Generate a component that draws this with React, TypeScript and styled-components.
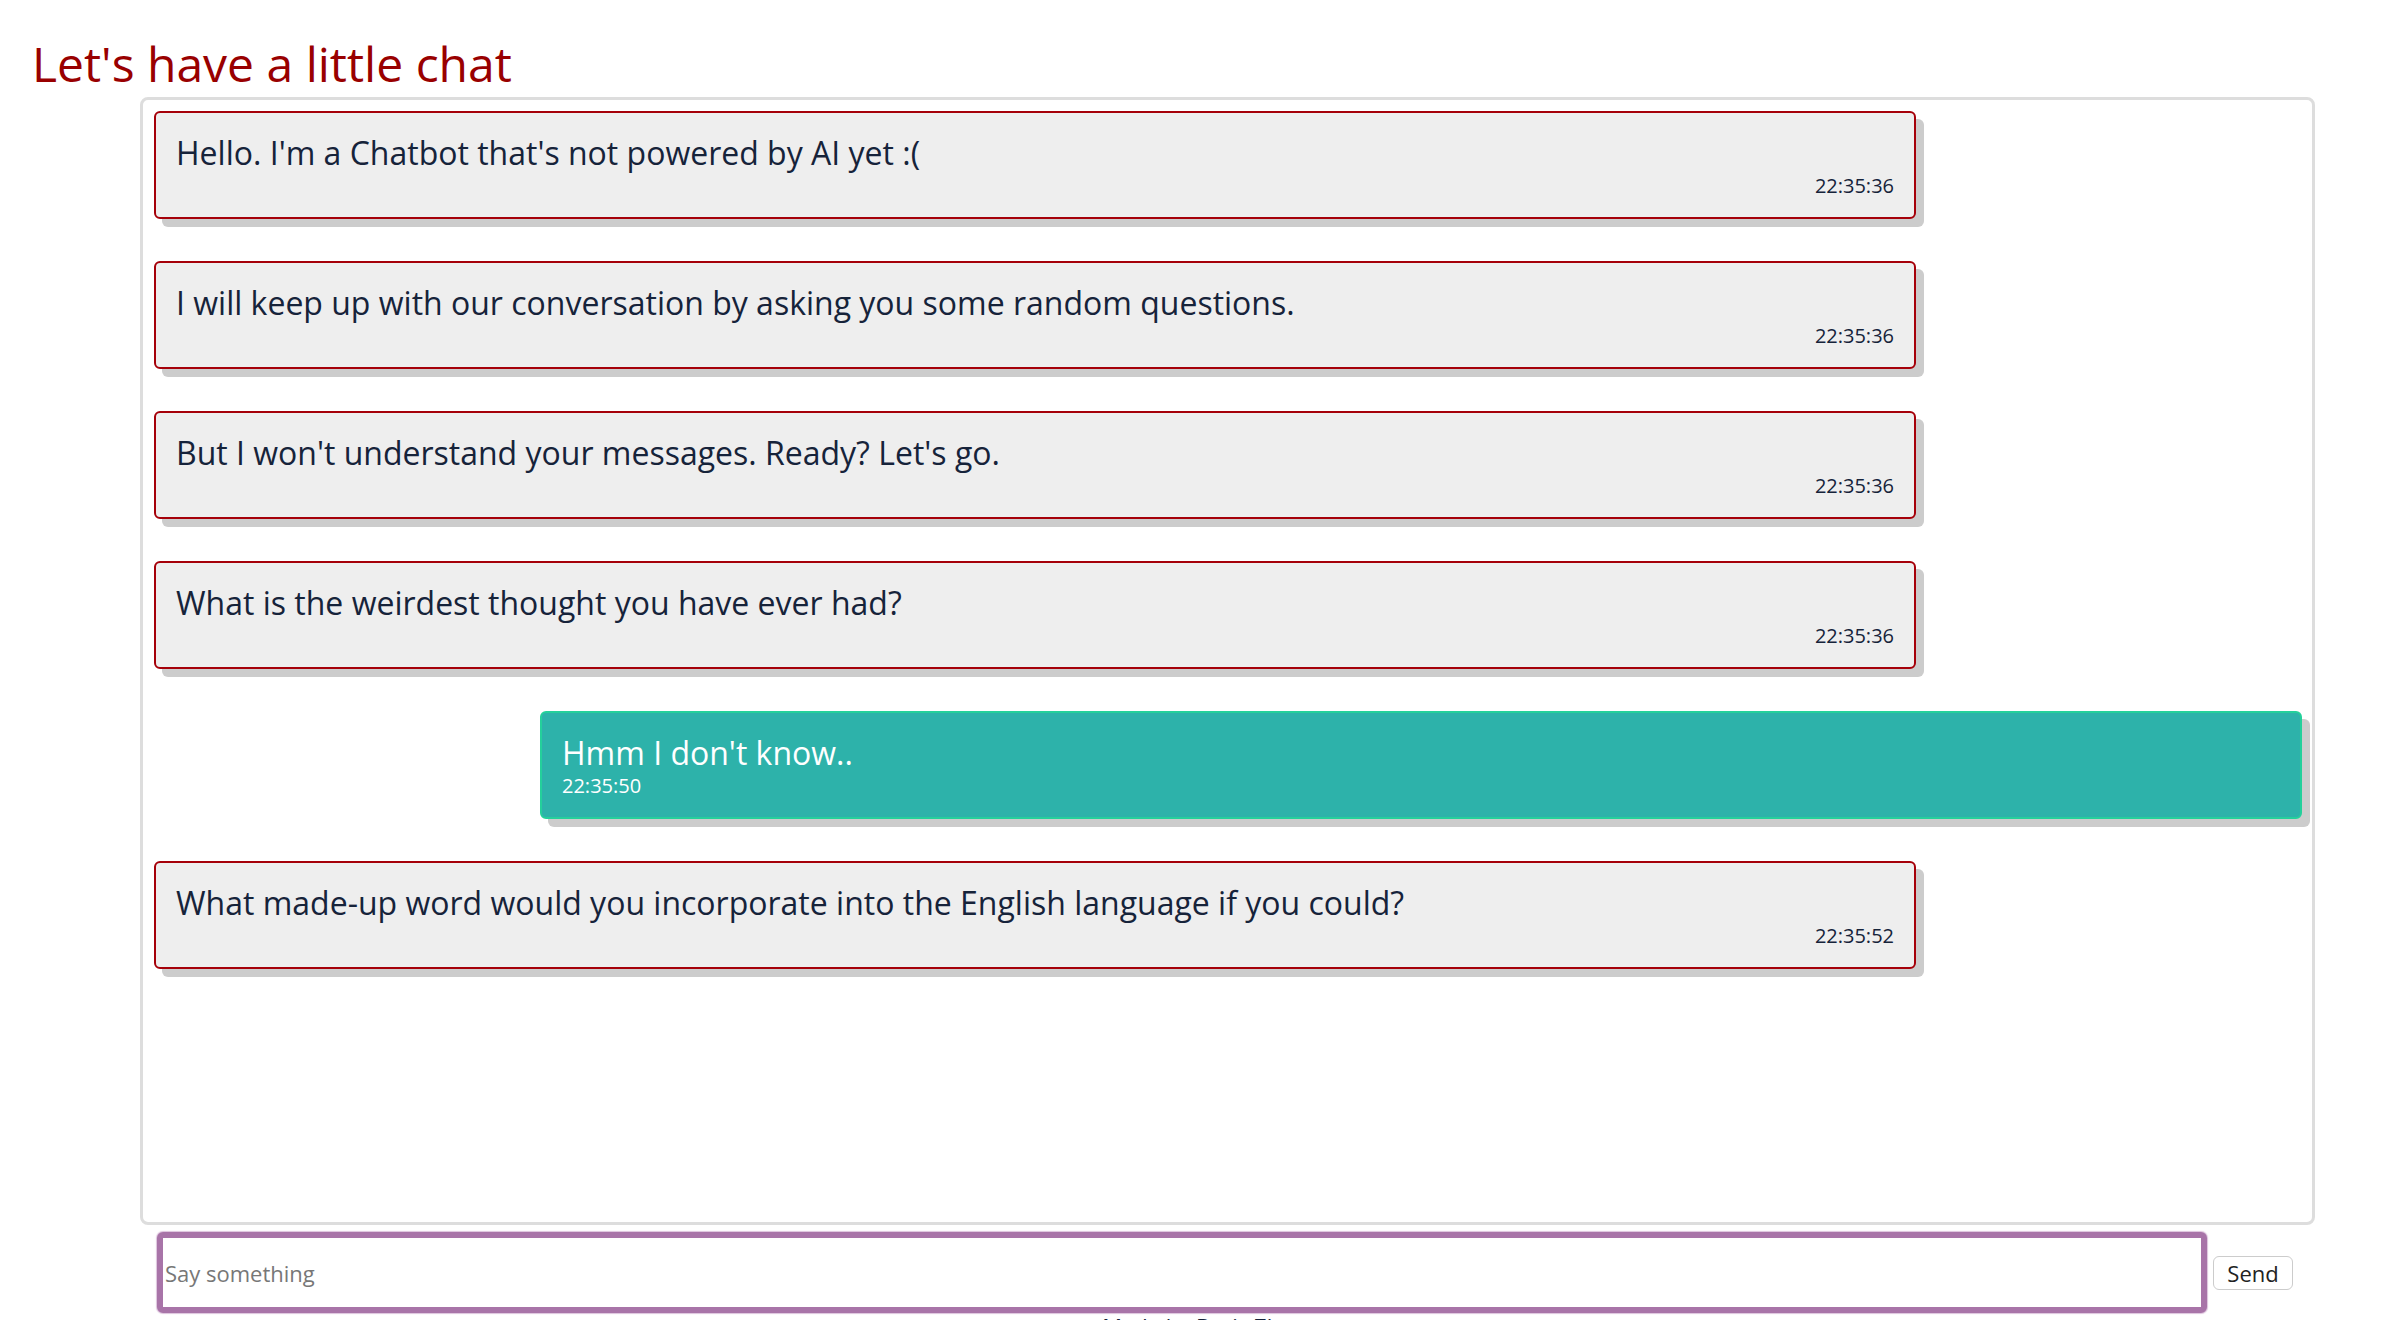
import React from "react";
import styled, { createGlobalStyle } from "styled-components";

const Global = createGlobalStyle`
  html, body { margin: 0; padding: 0; background: #fff; }
  body { font-family: "Open Sans", "Liberation Sans", sans-serif; }
  * { box-sizing: border-box; }
`;

const Page = styled.div`
  display: flex;
  flex-direction: column;
  width: 2394px;
  height: 1320px;
  overflow: hidden;
  & > * { flex-shrink: 0; }
`;

const Title = styled.h1`
  margin: 31px 0 0 32px;
  font-size: 48px;
  font-weight: 400;
  line-height: 66px;
  color: #990000;
`;

const ChatBox = styled.div`
  margin-left: 140px;
  width: 2175px;
  height: 1128px;
  border: 3px solid #dddddd;
  border-radius: 8px;
  padding: 11px 10px 11px 11px;
  display: flex;
  flex-direction: column;
  gap: 42px;
`;

const Bubble = styled.div<{ $user?: boolean }>`
  width: 1762px;
  align-self: ${(p) => (p.$user ? "flex-end" : "flex-start")};
  display: flex;
  flex-direction: column;
  padding: 18px 20px 19px 20px;
  border-radius: 6px;
  border: 2px solid ${(p) => (p.$user ? "#24d09b" : "#a50009")};
  background: ${(p) => (p.$user ? "#2db2aa" : "#eeeeee")};
  color: ${(p) => (p.$user ? "#ffffff" : "#16233a")};
  box-shadow: 8px 8px 0 #cccccc;
`;

const MsgText = styled.div`
  font-size: 32px;
  line-height: 43px;
`;

const Stamp = styled.div<{ $user?: boolean }>`
  font-size: 20px;
  line-height: 24px;
  text-align: ${(p) => (p.$user ? "left" : "right")};
`;

const InputRow = styled.form`
  margin: 7px 0 0 157px;
  display: flex;
  align-items: center;
  gap: 6px;
`;

const TextInput = styled.input`
  width: 2050px;
  height: 81px;
  border: 6px solid #a874a8;
  border-radius: 6px;
  box-shadow: 0 0 1px 1px #dcc2dc;
  padding: 0 2px;
  font-family: "Open Sans", "Liberation Sans", sans-serif;
  font-size: 22px;
  color: #222;
  outline: none;
  &::placeholder { color: #777777; }
`;

const SendButton = styled.button`
  width: 80px;
  height: 34px;
  border: 1px solid #cccccc;
  border-radius: 6px;
  background: #ffffff;
  font-family: "Open Sans", "Liberation Sans", sans-serif;
  font-size: 22px;
  color: #222;
  padding: 0;
`;

const Footer = styled.div`
  text-align: center;
  padding-left: 26px;
  font-size: 22px;
  line-height: 30px;
  color: #16233a;
  margin-top: -2px;
`;

const messages: { text: string; time: string; user?: boolean }[] = [
  { text: "Hello. I'm a Chatbot that's not powered by AI yet :(", time: "22:35:36" },
  { text: "I will keep up with our conversation by asking you some random questions.", time: "22:35:36" },
  { text: "But I won't understand your messages. Ready? Let's go.", time: "22:35:36" },
  { text: "What is the weirdest thought you have ever had?", time: "22:35:36" },
  { text: "Hmm I don't know..", time: "22:35:50", user: true },
  { text: "What made-up word would you incorporate into the English language if you could?", time: "22:35:52" },
];

export default function App() {
  return (
    <Page>
      <Global />
      <Title>Let's have a little chat</Title>
      <ChatBox>
        {messages.map((m, i) => (
          <Bubble key={i} $user={m.user}>
            <MsgText>{m.text}</MsgText>
            <Stamp $user={m.user}>{m.time}</Stamp>
          </Bubble>
        ))}
      </ChatBox>
      <InputRow onSubmit={(e) => e.preventDefault()}>
        <TextInput placeholder="Say something" />
        <SendButton type="submit">Send</SendButton>
      </InputRow>
      <Footer>Made by Boris Zhang</Footer>
    </Page>
  );
}
